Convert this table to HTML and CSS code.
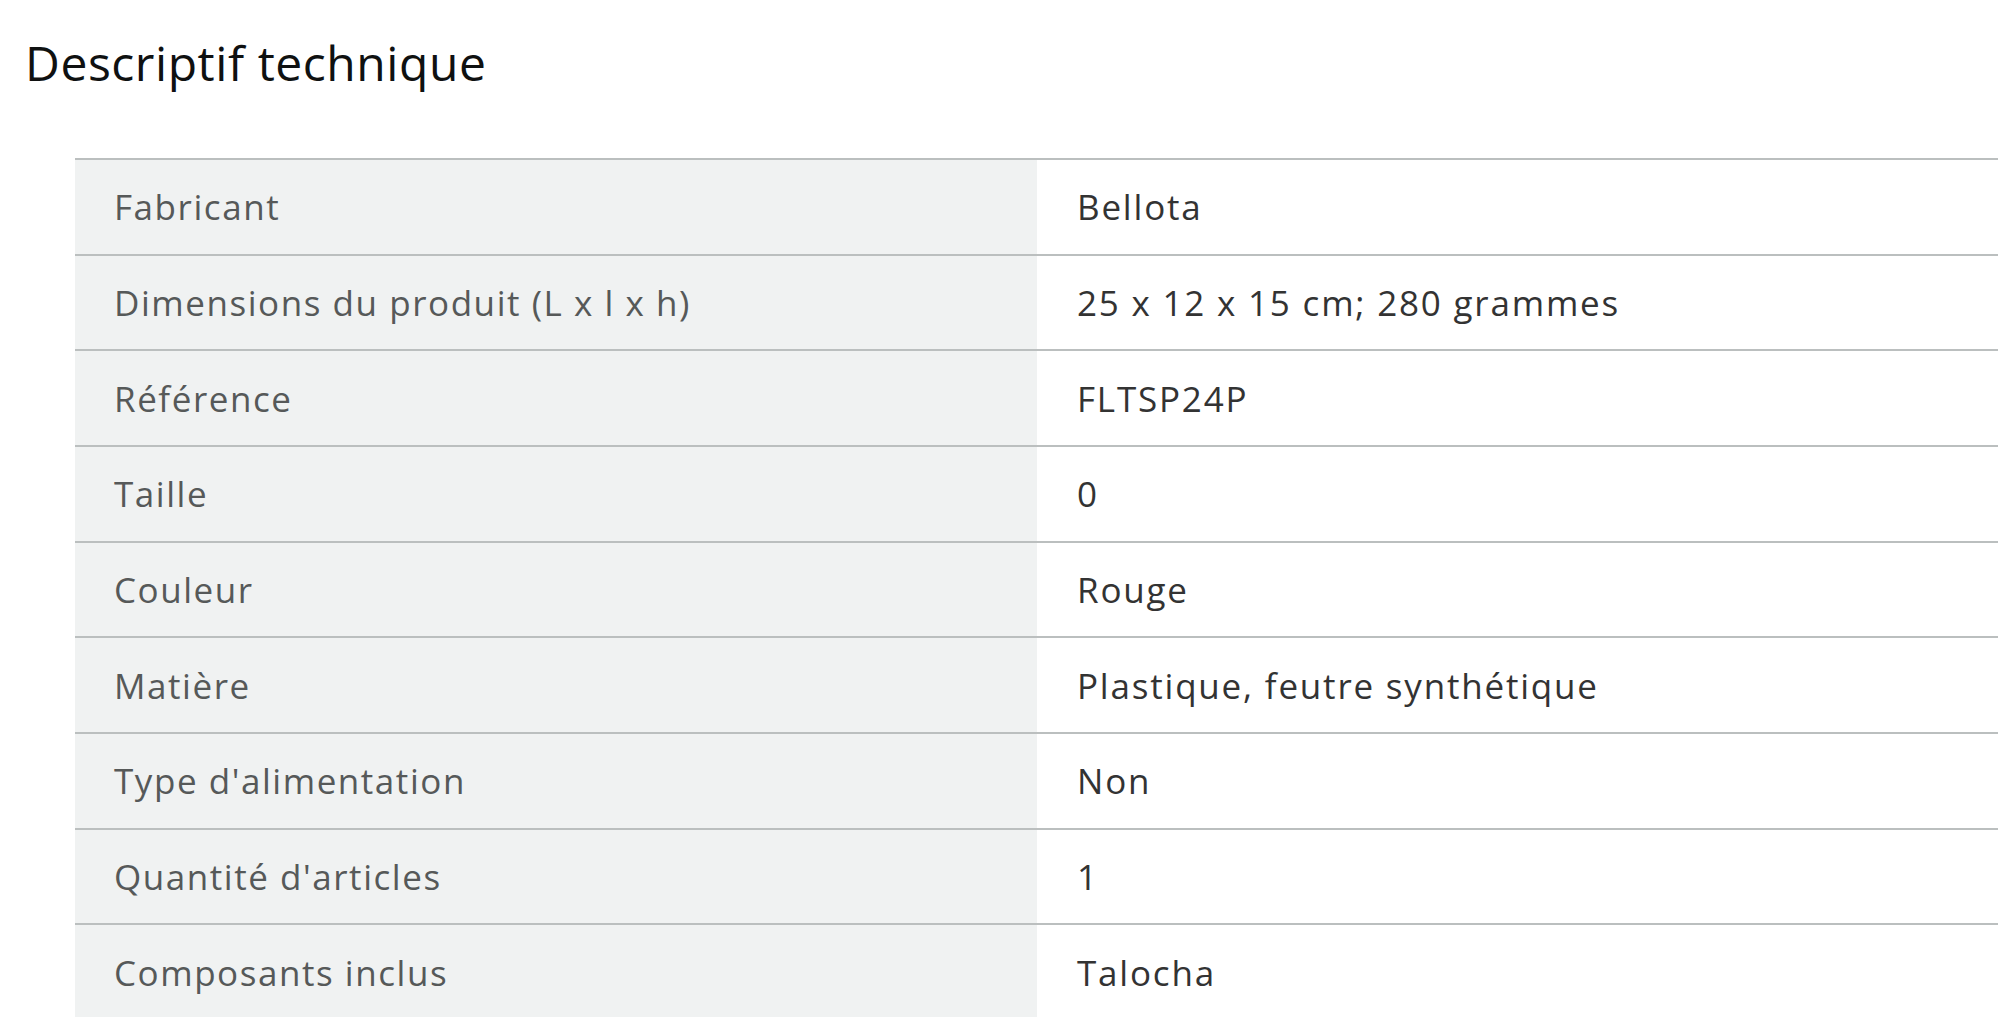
FILE: index.html
```html
<!DOCTYPE html>
<html lang="fr">
<head>
<meta charset="utf-8">
<title>Descriptif technique</title>
<link rel="stylesheet" href="styles.css">
</head>
<body>
<h1 class="title">Descriptif technique</h1>
<table class="specs">
  <tbody>
    <tr><th>Fabricant</th><td>Bellota</td></tr>
    <tr><th>Dimensions du produit (L x l x h)</th><td>25 x 12 x 15 cm; 280 grammes</td></tr>
    <tr><th>Référence</th><td>FLTSP24P</td></tr>
    <tr><th>Taille</th><td>0</td></tr>
    <tr><th>Couleur</th><td>Rouge</td></tr>
    <tr><th>Matière</th><td>Plastique, feutre synthétique</td></tr>
    <tr><th>Type d'alimentation</th><td>Non</td></tr>
    <tr><th>Quantité d'articles</th><td>1</td></tr>
    <tr><th>Composants inclus</th><td>Talocha</td></tr>
  </tbody>
</table>
</body>
</html>
```
FILE: styles.css
```css
html, body {
  margin: 0;
  padding: 0;
  background: #ffffff;
  overflow: hidden;
}
body {
  font-family: "Open Sans", "Liberation Sans", sans-serif;
  color: #0f1111;
}
.title {
  margin: 0;
  padding: 32px 0 0 25px;
  font-size: 48px;
  font-weight: 400;
  line-height: 62px;
  letter-spacing: 0.55px;
  color: #0f1111;
}
.specs {
  margin: 64px 0 0 75px;
  width: 1923px;
  border-collapse: collapse;
  font-size: 35px;
}
.specs tr {
  height: 95.66px;
  border-top: 2px solid #bbbfbf;
}
.specs th {
  width: 962px;
  box-sizing: border-box;
  padding: 0 0 0 39px;
  background: #f0f2f2;
  color: #565959;
  font-weight: 400;
  text-align: left;
  vertical-align: middle;
  letter-spacing: 1.55px;
}
.specs td {
  padding: 0 0 0 40px;
  color: #333333;
  text-align: left;
  vertical-align: middle;
  letter-spacing: 1.8px;
}
```
